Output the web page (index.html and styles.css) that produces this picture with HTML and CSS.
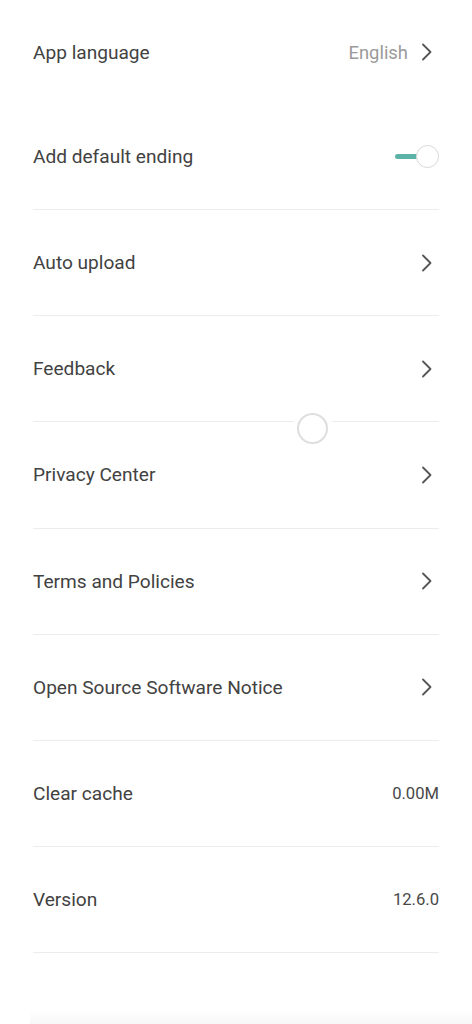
FILE: index.html
```html
<!DOCTYPE html>
<html>
<head>
<meta charset="utf-8">
<link rel="stylesheet" href="styles.css">
</head>
<body>
<div class="list">
  <div class="row first">
    <span class="label">App language</span>
    <span class="right"><span class="value gray">English</span><svg class="chev" viewBox="0 0 12 18"><path d="M2 1.5 L9.5 9 L2 16.5" /></svg></span>
  </div>
  <div class="row">
    <span class="label">Add default ending</span>
    <span class="toggle"><span class="track"></span><span class="knob"></span></span>
  </div>
  <div class="row">
    <span class="label">Auto upload</span>
    <svg class="chev" viewBox="0 0 12 18"><path d="M2 1.5 L9.5 9 L2 16.5" /></svg>
  </div>
  <div class="row">
    <span class="label">Feedback</span>
    <svg class="chev" viewBox="0 0 12 18"><path d="M2 1.5 L9.5 9 L2 16.5" /></svg>
  </div>
  <div class="row">
    <span class="label">Privacy Center</span>
    <svg class="chev" viewBox="0 0 12 18"><path d="M2 1.5 L9.5 9 L2 16.5" /></svg>
  </div>
  <div class="row">
    <span class="label">Terms and Policies</span>
    <svg class="chev" viewBox="0 0 12 18"><path d="M2 1.5 L9.5 9 L2 16.5" /></svg>
  </div>
  <div class="row">
    <span class="label">Open Source Software Notice</span>
    <svg class="chev" viewBox="0 0 12 18"><path d="M2 1.5 L9.5 9 L2 16.5" /></svg>
  </div>
  <div class="row">
    <span class="label">Clear cache</span>
    <span class="value small">0.00M</span>
  </div>
  <div class="row">
    <span class="label">Version</span>
    <span class="value small">12.6.0</span>
  </div>
</div>
<div class="spinner"></div>
<div class="bottom-fade"></div>
</body>
</html>
```
FILE: styles.css
```css
html, body {
  margin: 0;
  padding: 0;
  background: #ffffff;
}
body {
  font-family: Roboto, "Noto Sans", "Liberation Sans", sans-serif;
  color: #404040;
  width: 472px;
  height: 1024px;
  overflow: hidden;
  position: relative;
}
.list {
  display: flex;
  flex-direction: column;
  padding: 0 33px;
}
.row {
  height: 105.15px;
  border-bottom: 1px solid #ececec;
  display: flex;
  align-items: center;
  justify-content: space-between;
}
.row.first {
  height: 104px;
  border-bottom: none;
}
.label {
  font-size: 19.1px;
  color: #424242;
}
.right {
  display: flex;
  align-items: center;
  gap: 13px;
}
.value.gray {
  font-size: 18.4px;
  color: #9a9a9a;
}
.value.small {
  font-size: 16.6px;
  color: #484848;
}
.chev {
  width: 12px;
  height: 18px;
  margin-right: 6px;
  fill: none;
  stroke: #555555;
  stroke-width: 1.8;
  stroke-linecap: round;
  stroke-linejoin: round;
}
.toggle {
  position: relative;
  width: 44px;
  height: 24px;
  display: flex;
  align-items: center;
}
.track {
  width: 24px;
  height: 5px;
  border-radius: 3px;
  background: #5bb3a8;
}
.knob {
  position: absolute;
  right: 0;
  top: 0;
  width: 21px;
  height: 21px;
  border-radius: 50%;
  background: #ffffff;
  border: 1.5px solid #d8d8d8;
}
.spinner {
  position: absolute;
  left: 297px;
  top: 413px;
  width: 31px;
  height: 31px;
  box-sizing: border-box;
  border-radius: 50%;
  border: 2px solid #dedede;
  background: #ffffff;
  box-shadow: 0 0 0 5px #ffffff;
}
.bottom-fade {
  position: absolute;
  left: 30px;
  right: 0;
  bottom: 0;
  height: 14px;
  background: linear-gradient(to bottom, #ffffff, #f7f7f7);
}
```
